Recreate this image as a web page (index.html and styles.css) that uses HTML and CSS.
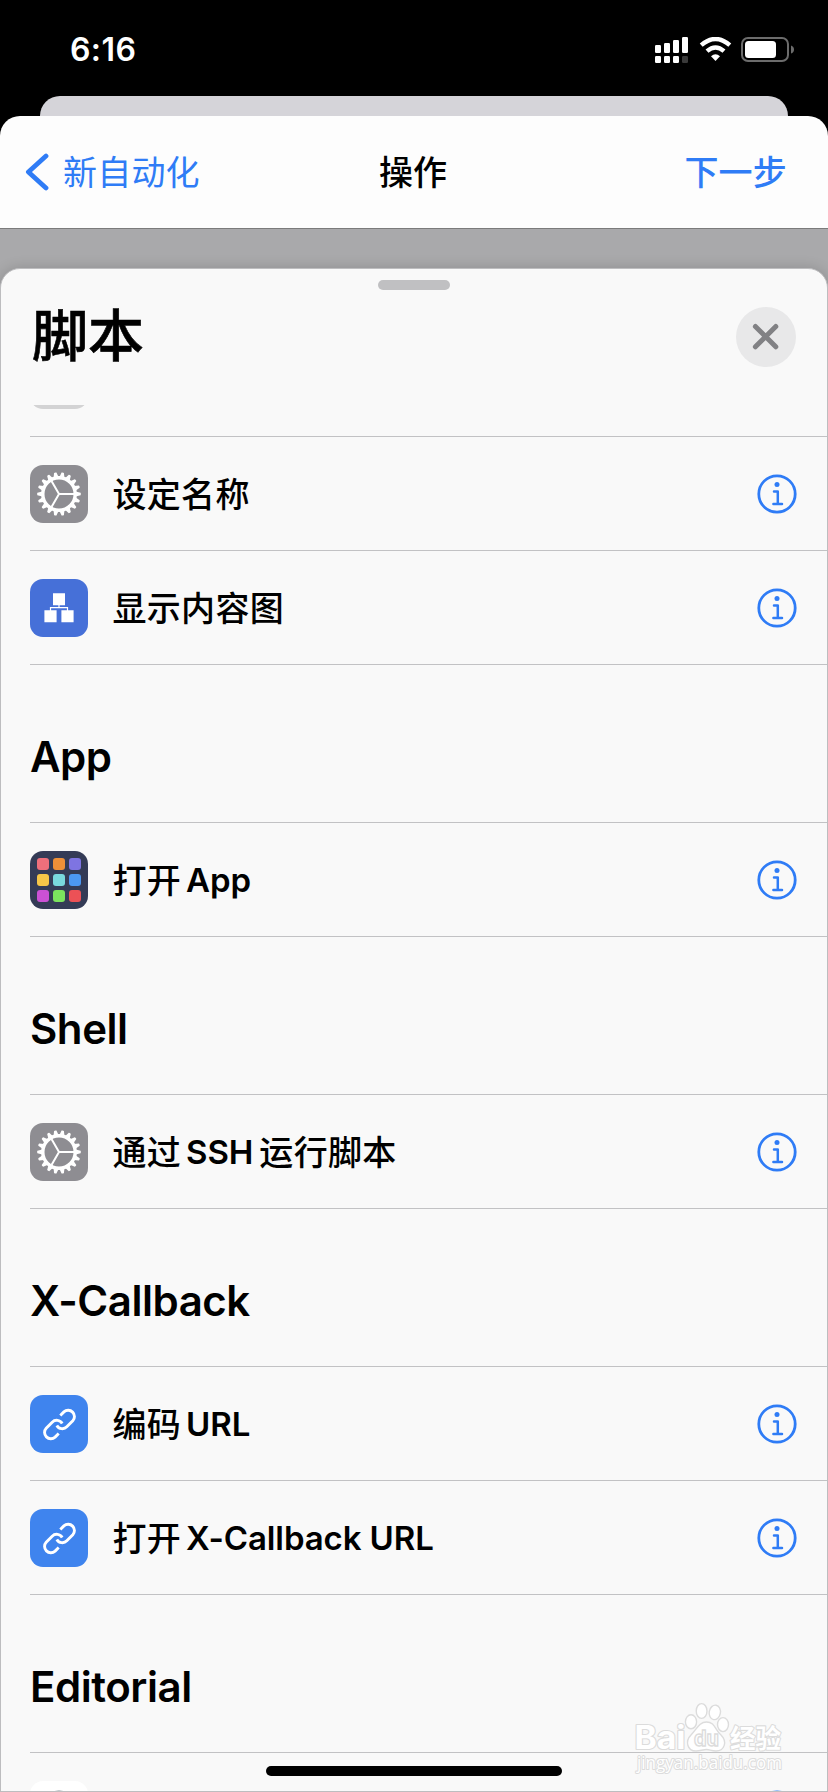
FILE: index.html
```html
<!DOCTYPE html>
<html lang="zh-CN">
<head>
<meta charset="utf-8">
<title>操作</title>
<link rel="stylesheet" href="styles.css">
</head>
<body>
<svg class="defs" width="0" height="0" aria-hidden="true">
  <defs>
    <g id="tooth"><path d="M16.6 -2.6L21.6 -1.2Q22.2 0 21.6 1.2L16.6 2.6Z"/></g>
    <g id="teeth3"><use href="#tooth"/><use href="#tooth" transform="rotate(20)"/><use href="#tooth" transform="rotate(40)"/></g>
    <symbol id="gear" viewBox="0 0 58 58">
      <g transform="translate(29 29)" fill="#fff">
        <use href="#teeth3"/><use href="#teeth3" transform="rotate(60)"/><use href="#teeth3" transform="rotate(120)"/>
        <use href="#teeth3" transform="rotate(180)"/><use href="#teeth3" transform="rotate(240)"/><use href="#teeth3" transform="rotate(300)"/>
        <circle r="16.2" fill="none" stroke="#fff" stroke-width="3.4"/>
        <path d="M0 0H15M0 0L-7.5 -13M0 0L-7.5 13" fill="none" stroke="#fff" stroke-width="2"/>
      </g>
    </symbol>
    <symbol id="link" viewBox="0 0 58 58">
      <g fill="none" stroke="#fff" stroke-width="2.9">
        <path d="M30.3 20.5L33.9 16.9A6.3 6.3 0 0 1 42.8 25.8L36.8 31.8A6.3 6.3 0 0 1 26.8 30.5"/>
        <path d="M28.7 38.5L25.1 42.1A6.3 6.3 0 0 1 16.2 33.2L22.2 27.2A6.3 6.3 0 0 1 32.2 28.5"/>
      </g>
    </symbol>
    <symbol id="info" viewBox="0 0 40 40">
      <circle cx="20" cy="20" r="18.2" fill="none" stroke="#2f7cf6" stroke-width="2.8"/>
      <circle cx="20" cy="10.4" r="2.5" fill="#2f7cf6"/>
      <path d="M17 17.4H20.8V30M16.4 30H25" fill="none" stroke="#2f7cf6" stroke-width="2.5" stroke-linecap="round" stroke-linejoin="round"/>
    </symbol>
  </defs>
</svg>
<div class="screen">
  <header class="status">
    <span class="time">6:16</span>
    <svg class="status-icons" viewBox="655 37 139 26">
      <g fill="#fff">
        <rect x="655" y="45" width="6" height="8" rx="1.2"/><rect x="664" y="43" width="6" height="10" rx="1.2"/>
        <rect x="673" y="40" width="6" height="13" rx="1.2"/><rect x="682" y="37" width="6" height="16" rx="1.2"/>
        <rect x="655" y="56" width="6" height="7" rx="1.2"/><rect x="664" y="56" width="6" height="7" rx="1.2"/>
        <rect x="673" y="56" width="6" height="7" rx="1.2"/><rect x="682" y="56" width="6" height="7" rx="1.2" fill="#3a3a3a"/>
        <path d="M715.5 61L711 56.3Q715.5 52.3 720 56.3Z"/>
        <rect x="745" y="41" width="31" height="17" rx="3.5"/>
      </g>
      <path d="M701.2 45.2Q715.5 32.8 729.8 45.2M707 51.2Q715.5 43.8 724 51.2" fill="none" stroke="#fff" stroke-width="4.4"/>
      <rect x="742" y="38" width="46" height="23" rx="6" fill="none" stroke="#6c6c6c" stroke-width="2"/>
      <path d="M791 45.5Q794 46.5 794 49.5Q794 52.5 791 53.5Z" fill="#6c6c6c"/>
    </svg>
  </header>
  <div class="peek"></div>
  <nav class="nav">
    <a class="back">
      <svg class="chevron" viewBox="0 0 24 40"><path d="M21 4L3.4 20L21 36" fill="none" stroke="#2f7cf6" stroke-width="4.8" stroke-linecap="round" stroke-linejoin="round"/></svg>
      <span class="nav-text">新自动化</span>
    </a>
    <h1 class="nav-title nav-text">操作</h1>
    <a class="next nav-text">下一步</a>
  </nav>
  <main class="backdrop">
    <section class="sheet">
      <div class="grabber"></div>
      <div class="sheet-head">
        <h2 class="sheet-title">脚本</h2>
        <button class="close" aria-label="关闭"><svg viewBox="0 0 60 60"><path d="M19.4 19.4L39.8 39.8M39.8 19.4L19.4 39.8" stroke="#818184" stroke-width="5" stroke-linecap="round"/></svg></button>
      </div>
      <div class="list">
        <div class="row row-first"><span class="tile pale"></span></div>
        <div class="row"><svg class="tile gray"><use href="#gear"/></svg><span class="label">设定名称</span><svg class="info"><use href="#info"/></svg></div>
        <div class="row">
          <svg class="tile indigo" viewBox="0 0 58 58"><path d="M23 14.3h12v12h-12zM14.4 31.3h12.2v12H14.4zM31.4 31.3h12.2v12H31.4z" fill="#fff"/><path d="M29 26v3M20.5 32v-3.4h17V32" fill="none" stroke="#fff" stroke-width="1.2"/></svg>
          <span class="label">显示内容图</span><svg class="info"><use href="#info"/></svg>
        </div>
        <h3 class="group">App</h3>
        <div class="row">
          <svg class="tile navy" viewBox="0 0 58 58">
            <rect x="7" y="7" width="12" height="12" rx="3" fill="#ee6f7b"/><rect x="23" y="7" width="12" height="12" rx="3" fill="#ee9038"/><rect x="39" y="7" width="12" height="12" rx="3" fill="#7e74e2"/>
            <rect x="7" y="23" width="12" height="12" rx="3" fill="#f6c648"/><rect x="23" y="23" width="12" height="12" rx="3" fill="#79d8dd"/><rect x="39" y="23" width="12" height="12" rx="3" fill="#4b98f3"/>
            <rect x="7" y="39" width="12" height="12" rx="3" fill="#cb51d5"/><rect x="23" y="39" width="12" height="12" rx="3" fill="#7be45e"/><rect x="39" y="39" width="12" height="12" rx="3" fill="#ec5156"/>
          </svg>
          <span class="label">打开<span class="lat">App</span></span><svg class="info"><use href="#info"/></svg>
        </div>
        <h3 class="group">Shell</h3>
        <div class="row"><svg class="tile gray"><use href="#gear"/></svg><span class="label">通过<span class="lat mid">SSH</span>运行脚本</span><svg class="info"><use href="#info"/></svg></div>
        <h3 class="group">X-Callback</h3>
        <div class="row"><svg class="tile blue"><use href="#link"/></svg><span class="label">编码<span class="lat">URL</span></span><svg class="info"><use href="#info"/></svg></div>
        <div class="row"><svg class="tile blue"><use href="#link"/></svg><span class="label">打开<span class="lat">X-Callback URL</span></span><svg class="info"><use href="#info"/></svg></div>
        <h3 class="group">Editorial</h3>
        <div class="row"><svg class="tile white" viewBox="0 0 58 58"><circle cx="29" cy="29" r="19.5" fill="#7d8b93"/></svg><span class="label"></span><svg class="info"><use href="#info"/></svg></div>
      </div>
    </section>
  </main>
  <svg class="watermark" viewBox="626 1692 170 90">
    <g fill="#fff" stroke="#dcdcdc" stroke-width="1.4">
      <g paint-order="stroke" stroke-width="2.2" stroke-linejoin="round">
        <text class="wm-bai" x="634.5" y="1749" textLength="51" lengthAdjust="spacingAndGlyphs">Bai</text>
        <text class="wm-cjk" x="730" y="1747.5" textLength="51" lengthAdjust="spacingAndGlyphs">经验</text>
        <text class="wm-url" x="637" y="1769" textLength="145" lengthAdjust="spacingAndGlyphs">jingyan.baidu.com</text>
      </g>
      <ellipse cx="691" cy="1721.8" rx="5.6" ry="7"/>
      <ellipse cx="701.6" cy="1711" rx="5.4" ry="7.4"/>
      <ellipse cx="714.8" cy="1712.4" rx="5.6" ry="7.3" transform="rotate(10 714.8 1712.4)"/>
      <ellipse cx="723" cy="1724.6" rx="5.5" ry="7"/>
      <path d="M706.5 1722C715 1722 715 1730 721 1735C728 1742 724 1751 716 1751C711 1751 710 1749.5 706.5 1749.5C703 1749.5 700 1751 696 1751C687 1751 685 1741 691 1735C697 1729 699 1722 706.5 1722Z"/>
      <text class="wm-du" x="694" y="1746" textLength="25" lengthAdjust="spacingAndGlyphs">du</text>
    </g>
  </svg>
  <div class="home"></div>
</div>
</body>
</html>
```
FILE: styles.css
```css
* { box-sizing: border-box; }
body {
  margin: 0;
  background: #000;
  font-family: Inter, "Noto Sans CJK SC", sans-serif;
  color: #000;
}
h1, h2, h3 { margin: 0; }
svg { display: block; }
.defs { position: absolute; }
.screen {
  position: relative;
  width: 828px;
  height: 1792px;
  overflow: hidden;
  display: flex;
  flex-direction: column;
}
.status {
  flex: none;
  height: 96px;
  padding: 0 34px 0 70px;
  display: flex;
  justify-content: space-between;
}
.time {
  margin-top: 30px;
  line-height: 40px;
  font-size: 32px;
  font-weight: 600;
  letter-spacing: 0.4px;
  color: #fff;
}
.status-icons { width: 139px; height: 26px; margin-top: 37px; }
.peek {
  flex: none;
  height: 20px;
  margin: 0 40px;
  border-radius: 20px 20px 0 0;
  background: #d5d4d9;
}
.nav {
  flex: none;
  height: 113px;
  padding: 0 41px 0 25px;
  display: flex;
  justify-content: space-between;
  align-items: center;
  background: #fdfdfd;
  border-bottom: 1px solid #7b7b7b;
  border-radius: 20px 20px 0 0;
  font-size: 34px;
  letter-spacing: 0.2px;
  line-height: 50px;
}
.back, .next { flex: 1 1 0; color: #2f7cf6; }
.back { display: flex; align-items: center; }
.nav-text { padding-top: 2px; }
.chevron { width: 24px; height: 40px; margin-right: 14px; }
.nav-title { flex: none; width: 68px; margin-left: 14px; font-size: inherit; font-weight: 500; white-space: nowrap; letter-spacing: 0; }
.next { text-align: right; font-weight: 500; }
.backdrop {
  flex: 1;
  min-height: 0;
  padding-top: 39px;
  background: #a9a9ab;
}
.sheet {
  height: 1524px;
  display: flex;
  flex-direction: column;
  background: #f9f9f9;
  border: 1px solid #bdbdbf;
  border-radius: 20px 20px 0 0;
  box-shadow: 0 0 14px rgba(0, 0, 0, 0.16);
  overflow: hidden;
}
.grabber {
  flex: none;
  width: 72px;
  height: 10px;
  margin: 11px auto 0;
  border-radius: 5px;
  background: #c0c0c2;
}
.sheet-head {
  flex: none;
  height: 115px;
  padding: 17px 31px 0 31px;
  display: flex;
  justify-content: space-between;
  align-items: flex-start;
}
.sheet-title {
  margin-top: -1px;
  font-size: 56px;
  line-height: 60px;
  font-weight: 500;
  -webkit-text-stroke: 0.6px;
}
.close {
  width: 60px;
  height: 60px;
  padding: 0;
  border: 0;
  border-radius: 50%;
  background: #e8e8e9;
}
.list { flex: 1; min-height: 0; overflow: hidden; padding-left: 29px; }
.row {
  height: 114px;
  padding: 28px 30px 27px 0;
  display: flex;
  align-items: center;
  border-bottom: 1px solid #c2c2c4;
}
.row-first { margin-top: -82px; }
.tile { flex: none; width: 58px; height: 58px; border-radius: 13px; }
.pale { background: #d3d3d4; }
.gray { background: #8e8d92; }
.indigo { background: #4670d8; }
.navy { background: #343b56; }
.blue { background: #3f84ee; }
.white { background: #fff; }
.label {
  flex: 1;
  margin-left: 24.5px;
  padding-top: 2px;
  font-size: 34px;
  line-height: 50px;
  font-weight: 500;
  letter-spacing: 0.3px;
  white-space: nowrap;
}
.lat {
  margin-left: 5px;
  font-size: 33px;
  line-height: 30px;
  font-weight: 600;
  letter-spacing: -0.1px;
  vertical-align: 1px;
}
.mid { margin-right: 6px; }
.info { width: 40px; height: 40px; flex: none; }
.group {
  height: 158px;
  padding-top: 66px;
  font-size: 42px;
  line-height: 52px;
  font-weight: 600;
  letter-spacing: -0.45px;
  border-bottom: 1px solid #c2c2c4;
}
.home {
  position: absolute;
  left: 266px;
  bottom: 16px;
  width: 296px;
  height: 10px;
  border-radius: 5px;
  background: #000;
}
.watermark { position: absolute; left: 626px; top: 1692px; width: 170px; height: 90px; overflow: visible; }
.wm-bai { font: 700 32px Inter, sans-serif; }
.wm-cjk { font: 700 26px "Noto Sans CJK SC", sans-serif; }
.wm-url { font: 400 19px "Open Sans", sans-serif; }
.wm-du { font: 700 21px Inter, sans-serif; }
```
